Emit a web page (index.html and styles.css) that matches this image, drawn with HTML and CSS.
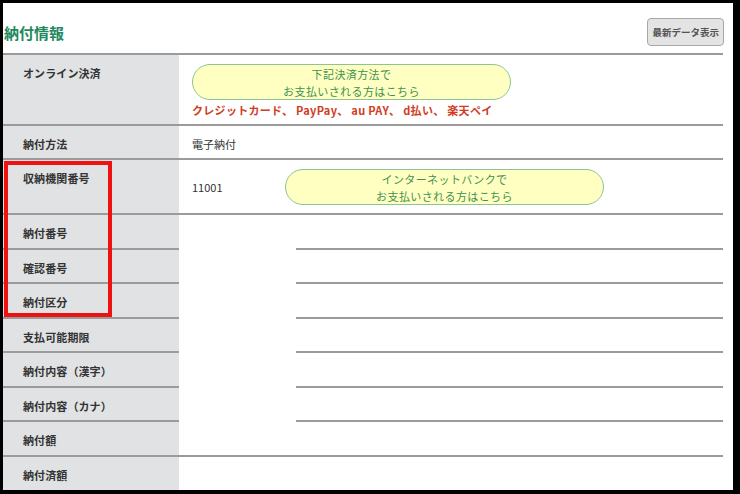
FILE: index.html
```html
<!DOCTYPE html>
<html lang="ja">
<head>
    <meta charset="UTF-8">
    <meta name="viewport" content="width=device-width, initial-scale=1.0">
    <title>納付情報</title>
    <link rel="stylesheet" href="styles.css">
</head>
<body>
    <div class="panel">
        <div class="panel-head">
            <h2 class="panel-title">納付情報</h2>
            <button class="refresh-btn">最新データ表示</button>
        </div>

        <div class="info-table">
            <div class="row row-online">
                <div class="label">オンライン決済</div>
                <div class="value">
                    <a href="#" class="pay-btn">下記決済方法で<br>お支払いされる方はこちら</a>
                    <p class="pay-brands">クレジットカード、 PayPay、 au PAY、 d払い、 楽天ペイ</p>
                </div>
            </div>
            <div class="row row-short">
                <div class="label">納付方法</div>
                <div class="value">電子納付</div>
            </div>
            <div class="row row-bank">
                <div class="label">収納機関番号</div>
                <div class="value">
                    <span class="agency-no">11001</span>
                    <a href="#" class="pay-btn">インターネットバンクで<br>お支払いされる方はこちら</a>
                </div>
            </div>
            <div class="row row-split">
                <div class="label">納付番号</div>
                <div class="value"></div>
            </div>
            <div class="row row-split">
                <div class="label">確認番号</div>
                <div class="value"></div>
            </div>
            <div class="row row-split">
                <div class="label">納付区分</div>
                <div class="value"></div>
            </div>
            <div class="row row-split">
                <div class="label">支払可能期限</div>
                <div class="value"></div>
            </div>
            <div class="row row-split">
                <div class="label">納付内容（漢字）</div>
                <div class="value"></div>
            </div>
            <div class="row row-split">
                <div class="label">納付内容（カナ）</div>
                <div class="value"></div>
            </div>
            <div class="row">
                <div class="label">納付額</div>
                <div class="value"></div>
            </div>
            <div class="row row-last">
                <div class="label">納付済額</div>
                <div class="value"></div>
            </div>

            <!-- highlight around the payment number group -->
            <div class="mark-box"></div>
        </div>
    </div>
</body>
</html>
```

FILE: styles.css
```css
body {
    margin: 0;
    background-color: #000;
    font-family: "Noto Sans CJK JP", "Noto Sans", sans-serif;
    color: #333;
}

.panel {
    margin: 3px 7px 0 3px;
    height: 487px;
    padding-right: 10px;
    background-color: #fff;
    overflow: hidden;
}

.panel-head {
    height: 50px;
    box-sizing: border-box;
    padding: 8px 0 0 1px;
    display: flex;
    align-items: center;
    justify-content: space-between;
}

.panel-title {
    margin: 0;
    font-size: 15px;
    font-weight: bold;
    color: #23885e;
}

.refresh-btn {
    height: 28px;
    padding: 0 4px;
    margin-right: -1px;
    font-family: inherit;
    font-size: 9.5px;
    font-weight: bold;
    color: #555;
    background-color: #e4e4e4;
    border: 1px solid #a8a8a8;
    border-radius: 4px;
}

.info-table {
    position: relative;
    border-top: 2px solid #9b9b9b;
}

.row {
    display: grid;
    grid-template-columns: 176px 1fr;
    height: 34.5px;
}

.label,
.value {
    box-sizing: border-box;
    border-bottom: 2px solid #9b9b9b;
    font-size: 11px;
    line-height: 14px;
}

.label {
    padding: 11px 0 0 20px;
    background-color: #e1e2e4;
    font-weight: bold;
    letter-spacing: 0.1px;
}

.value {
    padding: 11px 0 0 13px;
}

.row-online {
    height: 71px;
}

.row-online .value {
    padding-top: 9px;
}

.row-short {
    height: 34px;
}

.row-bank {
    height: 55px;
}

.row-bank .value {
    padding-top: 0;
    display: flex;
    align-items: center;
}

.agency-no {
    width: 93px;
}

/* value cells whose left part has no rule */
.row-split .value {
    border-bottom: none;
    padding: 0;
    display: flex;
    flex-direction: column;
    justify-content: flex-end;
}

.row-split .value::after {
    content: "";
    margin-left: 117px;
    border-bottom: 2px solid #9b9b9b;
}

.row-last {
    height: 33.5px;
}

.row-last .label,
.row-last .value {
    border-bottom: none;
}

.pay-btn {
    display: block;
    width: 319px;
    height: 36px;
    box-sizing: border-box;
    padding-top: 1px;
    border: 1px solid #8cc496;
    border-radius: 18px;
    background-color: #ffffc2;
    color: #3f9152;
    font-size: 11px;
    line-height: 17px;
    letter-spacing: 0.4px;
    text-align: center;
    text-decoration: none;
}

.pay-brands {
    margin: 3px 0 0;
    font-size: 11px;
    line-height: 14px;
    font-weight: bold;
    letter-spacing: 0.3px;
    color: #d23c1e;
}

.mark-box {
    position: absolute;
    left: 1px;
    top: 106px;
    width: 108px;
    height: 156px;
    box-sizing: border-box;
    border: 4px solid #ee1111;
}
```
